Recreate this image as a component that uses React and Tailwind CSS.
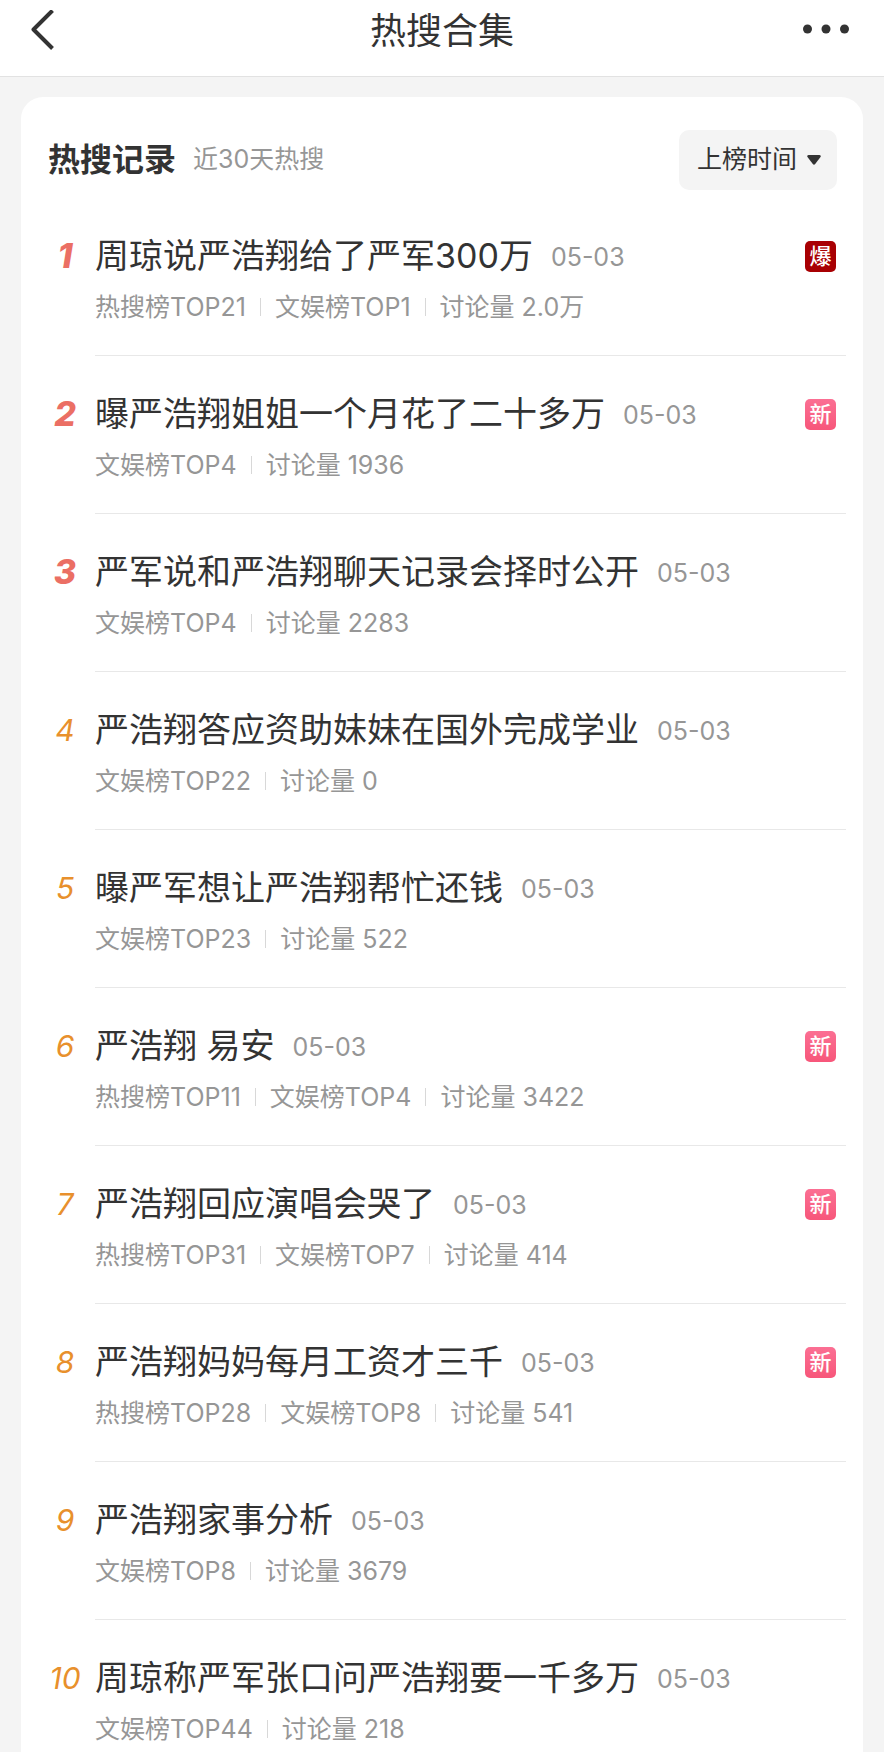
const records = [
  { title: '周琼说严浩翔给了严军300万', date: '05-03', meta: ['热搜榜TOP21', '文娱榜TOP1', '讨论量 2.0万'], tag: '爆' },
  { title: '曝严浩翔姐姐一个月花了二十多万', date: '05-03', meta: ['文娱榜TOP4', '讨论量 1936'], tag: '新' },
  { title: '严军说和严浩翔聊天记录会择时公开', date: '05-03', meta: ['文娱榜TOP4', '讨论量 2283'] },
  { title: '严浩翔答应资助妹妹在国外完成学业', date: '05-03', meta: ['文娱榜TOP22', '讨论量 0'] },
  { title: '曝严军想让严浩翔帮忙还钱', date: '05-03', meta: ['文娱榜TOP23', '讨论量 522'] },
  { title: '严浩翔 易安', date: '05-03', meta: ['热搜榜TOP11', '文娱榜TOP4', '讨论量 3422'], tag: '新' },
  { title: '严浩翔回应演唱会哭了', date: '05-03', meta: ['热搜榜TOP31', '文娱榜TOP7', '讨论量 414'], tag: '新' },
  { title: '严浩翔妈妈每月工资才三千', date: '05-03', meta: ['热搜榜TOP28', '文娱榜TOP8', '讨论量 541'], tag: '新' },
  { title: '严浩翔家事分析', date: '05-03', meta: ['文娱榜TOP8', '讨论量 3679'] },
  { title: '周琼称严军张口问严浩翔要一千多万', date: '05-03', meta: ['文娱榜TOP44', '讨论量 218'] },
];

const tagStyles = {
  爆: 'bg-[#a80003]',
  新: 'bg-linear-to-b from-[#fb6f93] to-[#f7567a]',
};

function Header() {
  return (
    <header className="grid grid-cols-[1fr_auto_1fr] items-center border-b border-[#e2e2e2] bg-white px-[30px] pt-0.5 pb-4">
      <button type="button" aria-label="返回" className="justify-self-start">
        <svg className="block" width="26" height="42" viewBox="0 0 26 42" fill="none" stroke="#333" strokeWidth="4" strokeLinejoin="round">
          <path d="M22.500 .5L3.500 19.500L22.500 38.500" />
        </svg>
      </button>
      <h1 className="text-[36px] leading-[58px]">热搜合集</h1>
      <button type="button" aria-label="更多" className="justify-self-end px-1">
        <svg className="block" width="48" height="42" viewBox="0 0 48 42" fill="#333">
          <circle cx="5.500" cy="19" r="4.500" />
          <circle cx="24" cy="19" r="4.500" />
          <circle cx="42.500" cy="19" r="4.500" />
        </svg>
      </button>
    </header>
  );
}

function SortSelect() {
  return (
    <div className="relative">
      <select
        aria-label="排序方式"
        defaultValue="time"
        className="block h-[60px] w-[158px] appearance-none rounded-[10px] bg-[#f4f4f4] pl-[18px] text-[25px]"
      >
        <option value="time">上榜时间</option>
      </select>
      <svg className="pointer-events-none absolute top-[25px] right-4" width="14" height="10" viewBox="0 0 14 10" fill="#333">
        <path d="M1.500 0h11q2 .4 1 2L8.200 9q-1.200 1.400-2.400 0L.5 2Q-.5.4 1.500 0z" />
      </svg>
    </div>
  );
}

function Row({ rank, item }) {
  return (
    <li className="group flex gap-[10px]">
      <span
        className={`mt-[35px] w-10 shrink-0 text-center leading-[46px] italic ${
          rank <= 3 ? 'text-[34px] font-extrabold text-[#eb6f64]' : 'text-[30px] text-[#e8902c]'
        }`}
      >
        {rank}
      </span>
      <div className="min-w-0 flex-1 border-b border-[#e8e8e8] pt-[35px] pb-[30px] group-last:border-0 group-last:pb-[5px]">
        <div className="flex items-center pr-[10px]">
          <a href="#" className="text-[34px] leading-[46px] whitespace-nowrap">{item.title}</a>
          <span className="ml-[18px] pt-0.5 text-[25px] leading-[44px] text-[#969696]">{item.date}</span>
          {item.tag && (
            <span className={`ml-auto size-[31px] rounded-[5px] text-center text-[22px] leading-[30px] font-medium text-white ${tagStyles[item.tag]}`}>
              {item.tag}
            </span>
          )}
        </div>
        <div className="mt-[10px] flex items-center text-[25px] leading-9 text-[#969696]">
          {item.meta.map((text, i) => (
            <span key={text} className="flex items-center whitespace-nowrap">
              {i > 0 && <i className="mx-[14px] h-[18px] w-px bg-[#d8d8d8]"></i>}
              {text}
            </span>
          ))}
        </div>
      </div>
    </li>
  );
}

export default function App() {
  return (
    <div className="flex min-h-screen flex-col bg-[#f4f4f4] font-[Inter,'Noto_Sans_CJK_SC',sans-serif] text-[#333]">
      <Header />
      <main className="mx-[21px] mt-5 flex-1 rounded-t-[22px] bg-white pt-[33px]">
        <div className="mb-2 flex items-center pr-[26px] pl-[27px]">
          <h2 className="text-[32px] font-bold">热搜记录</h2>
          <span className="ml-[17px] flex-1 text-[25px] text-[#969696]">近30天热搜</span>
          <SortSelect />
        </div>
        <ol className="pr-[17px] pl-6">
          {records.map((item, i) => (
            <Row key={item.title} rank={i + 1} item={item} />
          ))}
        </ol>
      </main>
    </div>
  );
}
